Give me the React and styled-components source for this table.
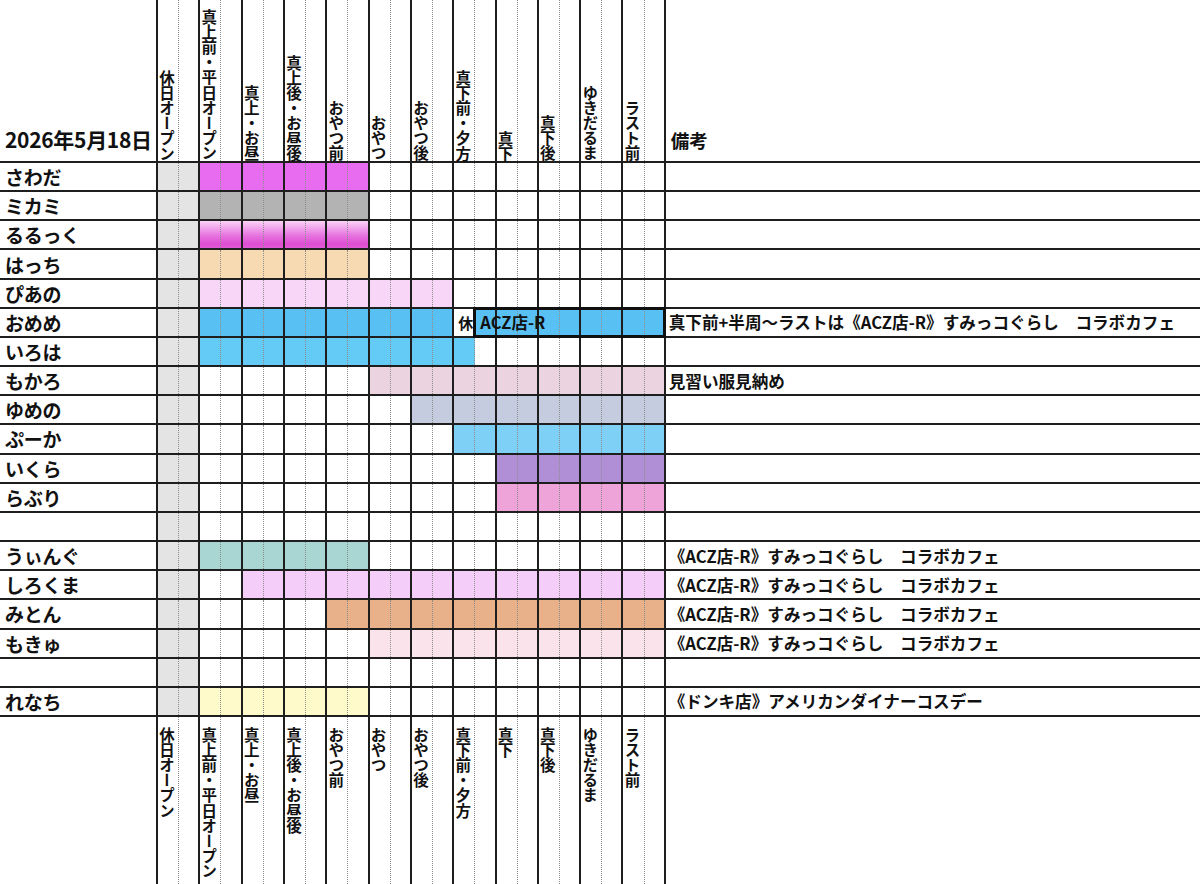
import React from "react"
import styled, { createGlobalStyle } from "styled-components"

const LINE = "#1e1e1e"
const DOT = "#8c8c8c"
const HOLIDAY = "#e5e4e5"
const COLLAB = "《ACZ店-R》すみっコぐらし　コラボカフェ"

const GlobalStyle = createGlobalStyle`
  html, body {
    margin: 0;
    padding: 0;
    background: #fff;
  }
  body {
    font-family: "Noto Sans CJK JP", "Noto Sans", sans-serif;
    color: #111;
  }
`

const Sheet = styled.div`
  width: 1200px;
  height: 884px;
  display: flex;
  flex-direction: column;
  overflow: hidden;
  background: #fff;
`

const Row = styled.div`
  display: grid;
  grid-template-columns: 158px repeat(24, 21.1667px) 1fr;
  height: ${(p) => p.$height || "29.16px"};
  flex: ${(p) => (p.$grow ? "1 1 auto" : "0 0 auto")};
  box-sizing: border-box;
  border-bottom: ${(p) => (p.$open ? "none" : `2px solid ${LINE}`)};
`

const NameCell = styled.div`
  box-sizing: border-box;
  border-right: 2px solid ${LINE};
  display: flex;
  align-items: ${(p) => (p.$bottom ? "flex-end" : "center")};
  padding: ${(p) => (p.$bottom ? "0 0 7px 5px" : "0 0 0 5px")};
  font-size: ${(p) => (p.$bottom ? "21px" : "19px")};
  font-weight: 700;
  letter-spacing: -0.3px;
  white-space: nowrap;
`

const Slot = styled.div`
  position: relative;
  box-sizing: border-box;
  border-right: ${(p) => (p.$second ? `2px solid ${LINE}` : `1px dotted ${DOT}`)};
  background: ${(p) => p.$fill || "transparent"};
  min-width: 0;
`

const HeadSlot = styled(Slot)`
  display: flex;
  flex-direction: column;
  justify-content: ${(p) => (p.$top ? "flex-end" : "flex-start")};
  align-items: flex-start;
  padding: ${(p) => (p.$top ? "0 0 0 1px" : "10px 0 0 1px")};
`

const VLabel = styled.span`
  writing-mode: vertical-rl;
  font-size: 15.5px;
  font-weight: 700;
  line-height: 15px;
  letter-spacing: -0.3px;
  white-space: nowrap;
`

const RestMark = styled.span`
  position: absolute;
  left: 4px;
  top: 50%;
  transform: translateY(-50%);
  font-size: 15px;
  font-weight: 700;
  line-height: 1;
`

const BookingBox = styled.div`
  position: absolute;
  left: -2px;
  top: -2px;
  bottom: -2px;
  width: 193px;
  box-sizing: border-box;
  border: 3px solid #101010;
  display: flex;
  align-items: center;
  padding-left: 4px;
  font-size: 16.5px;
  font-weight: 700;
  z-index: 2;
  white-space: nowrap;
`

const NoteCell = styled.div`
  display: flex;
  align-items: ${(p) => (p.$bottom ? "flex-end" : "center")};
  padding: ${(p) => (p.$bottom ? "0 0 8px 5px" : "0 0 0 3px")};
  font-size: ${(p) => (p.$bottom ? "18.5px" : "16.6px")};
  font-weight: 700;
  white-space: nowrap;
  overflow: hidden;
`

const columns = [
  "休日オープン",
  "真上前・平日オープン",
  "真上・お昼",
  "真上後・お昼後",
  "おやつ前",
  "おやつ",
  "おやつ後",
  "真下前・夕方",
  "真下",
  "真下後",
  "ゆきだるま",
  "ラスト前",
]

const ruruGradient =
  "linear-gradient(to bottom, #fbd3f6 0%, #f2a6ec 25%, #e672df 55%, #dd4fd2 85%, #e25ad6 100%)"

const rows = [
  { name: "さわだ", fill: "#e76cf0", from: 3, to: 10 },
  { name: "ミカミ", fill: "#b3b3b3", from: 3, to: 10 },
  { name: "るるっく", fill: ruruGradient, from: 3, to: 10 },
  { name: "はっち", fill: "#f7d9b2", from: 3, to: 10 },
  { name: "ぴあの", fill: "#f8d6f7", from: 3, to: 14 },
  {
    name: "おめめ",
    fill: "#58c0f3",
    from: 3,
    to: 24,
    rest: 15,
    booking: { at: 16, label: "ACZ店-R" },
    note: "真下前+半周〜ラストは《ACZ店-R》すみっコぐらし　コラボカフェ",
  },
  { name: "いろは", fill: "#63cbf6", from: 3, to: 15 },
  { name: "もかろ", fill: "#ebd4e0", from: 11, to: 24, note: "見習い服見納め" },
  { name: "ゆめの", fill: "#c6cce0", from: 13, to: 24 },
  { name: "ぷーか", fill: "#7ed0f7", from: 15, to: 24 },
  { name: "いくら", fill: "#b18fd7", from: 17, to: 24 },
  { name: "らぶり", fill: "#eea4d9", from: 17, to: 24 },
  { name: "" },
  { name: "うぃんぐ", fill: "#a9d6d3", from: 3, to: 10, note: COLLAB },
  { name: "しろくま", fill: "#f4cdf8", from: 5, to: 24, note: COLLAB },
  { name: "みとん", fill: "#e9b189", from: 9, to: 24, note: COLLAB },
  { name: "もきゅ", fill: "#fbe3ec", from: 11, to: 24, note: COLLAB },
  { name: "" },
  { name: "れなち", fill: "#fffac9", from: 3, to: 10, note: "《ドンキ店》アメリカンダイナーコスデー" },
]

const halves = Array.from({ length: 24 }, (_, i) => i + 1)

const fillFor = (row, h) => {
  if (h <= 2) return HOLIDAY
  if (row.rest === h) return null
  if (row.from && h >= row.from && h <= row.to) return row.fill
  return null
}

const HeaderRow = ({ top }) => (
  <Row $height={top ? "163px" : undefined} $grow={!top} $open={!top}>
    <NameCell $bottom>{top ? "2026年5月18日" : ""}</NameCell>
    {halves.map((h) => {
      const isFirst = h % 2 === 1
      return (
        <HeadSlot key={h} $second={!isFirst} $top={top}>
          {isFirst && <VLabel>{columns[(h - 1) / 2]}</VLabel>}
        </HeadSlot>
      )
    })}
    <NoteCell $bottom>{top ? "備考" : ""}</NoteCell>
  </Row>
)

const StaffRow = ({ row }) => (
  <Row>
    <NameCell>{row.name}</NameCell>
    {halves.map((h) => (
      <Slot key={h} $second={h % 2 === 0} $fill={fillFor(row, h)}>
        {row.rest === h && <RestMark>休</RestMark>}
        {row.booking && row.booking.at === h && (
          <BookingBox>{row.booking.label}</BookingBox>
        )}
      </Slot>
    ))}
    <NoteCell>{row.note || ""}</NoteCell>
  </Row>
)

const App = () => {
  return (
    <>
      <GlobalStyle />
      <Sheet>
        <HeaderRow top />
        {rows.map((row, i) => (
          <StaffRow key={i} row={row} />
        ))}
        <HeaderRow />
      </Sheet>
    </>
  )
}

export default App
